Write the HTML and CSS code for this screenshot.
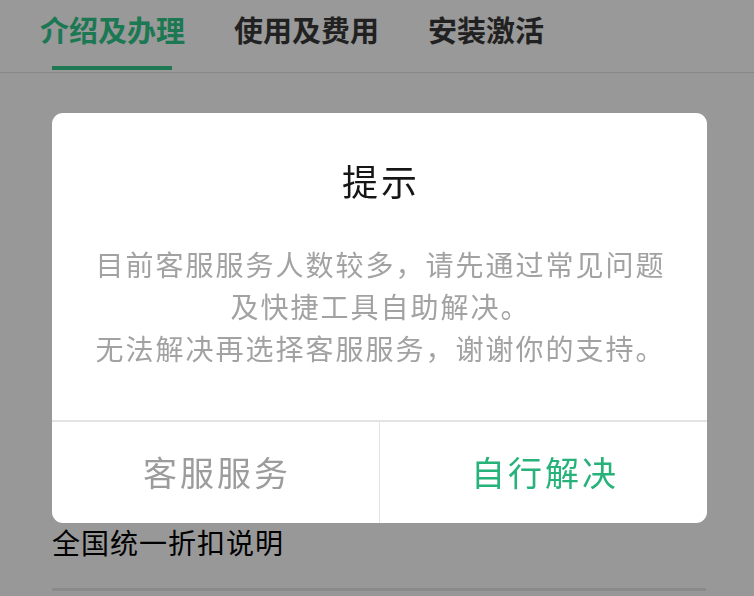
FILE: index.html
```html
<!DOCTYPE html>
<html lang="zh-CN">
<head>
<meta charset="utf-8">
<title>提示</title>
<link rel="stylesheet" href="styles.css">
</head>
<body>
<div class="page">
  <header class="tabs">
    <div class="tab active">介绍及办理</div>
    <div class="tab">使用及费用</div>
    <div class="tab">安装激活</div>
  </header>
  <main class="content">
    <div class="item">全国统一折扣说明</div>
  </main>
</div>
<div class="overlay">
  <div class="dialog">
    <div class="title">提示</div>
    <div class="message">目前客服服务人数较多，请先通过常见问题<br>及快捷工具自助解决。<br>无法解决再选择客服服务，谢谢你的支持。</div>
    <div class="actions">
      <div class="btn secondary">客服服务</div>
      <div class="btn primary">自行解决</div>
    </div>
  </div>
</div>
</body>
</html>
```
FILE: styles.css
```css
* { box-sizing: border-box; }
html, body {
  margin: 0;
  padding: 0;
  width: 754px;
  height: 596px;
  overflow: hidden;
  background: #ffffff;
  font-family: "Noto Sans CJK SC", "Noto Sans", sans-serif;
}
.page {
  width: 754px;
  height: 596px;
  background: #fdfdfd;
}
.tabs {
  height: 73px;
  display: flex;
  gap: 49px;
  padding-left: 40px;
  background: #ffffff;
  border-bottom: 1px solid #e2e2e2;
}
.tab {
  position: relative;
  font-size: 29px;
  font-weight: 700;
  color: #383838;
  line-height: 29px;
  padding-top: 15px;
  white-space: nowrap;
}
.tab.active { color: #30c98a; }
.tab.active::after {
  content: "";
  position: absolute;
  left: 12px;
  width: 120px;
  top: 66px;
  height: 4px;
  background: #31c98b;
}
.content {
  padding: 454px 48px 0 52px;
}
.item {
  font-size: 28px;
  letter-spacing: 1px;
  color: #000;
  line-height: 30px;
  padding-bottom: 31px;
  border-bottom: 3px solid #e6e6e6;
}
.overlay {
  position: fixed;
  inset: 0;
  background: rgba(0, 0, 0, 0.4);
  display: flex;
  justify-content: center;
  align-items: flex-start;
  padding-top: 113px;
  padding-left: 5px;
}
.dialog {
  width: 655px;
  height: 410px;
  background: #fff;
  border-radius: 11px;
  display: flex;
  flex-direction: column;
  overflow: hidden;
}
.title {
  margin-top: 47px;
  font-size: 36px;
  letter-spacing: 3px;
  line-height: 40px;
  text-align: center;
  color: #161616;
  padding-left: 3px;
}
.message {
  margin-top: 43px;
  font-size: 28px;
  letter-spacing: 2px;
  line-height: 42px;
  text-align: center;
  color: #a2a2a2;
  padding-left: 2px;
}
.actions {
  margin-top: auto;
  height: 103px;
  display: flex;
  border-top: 2px solid #e3e3e3;
}
.btn {
  flex: 1;
  display: flex;
  align-items: center;
  justify-content: center;
  font-size: 34px;
  letter-spacing: 3px;
  padding-left: 3px;
  padding-bottom: 2px;
}
.btn.secondary {
  color: #9c9c9c;
  border-right: 1px solid #e3e3e3;
}
.btn.primary {
  color: #27b27a;
}
```
